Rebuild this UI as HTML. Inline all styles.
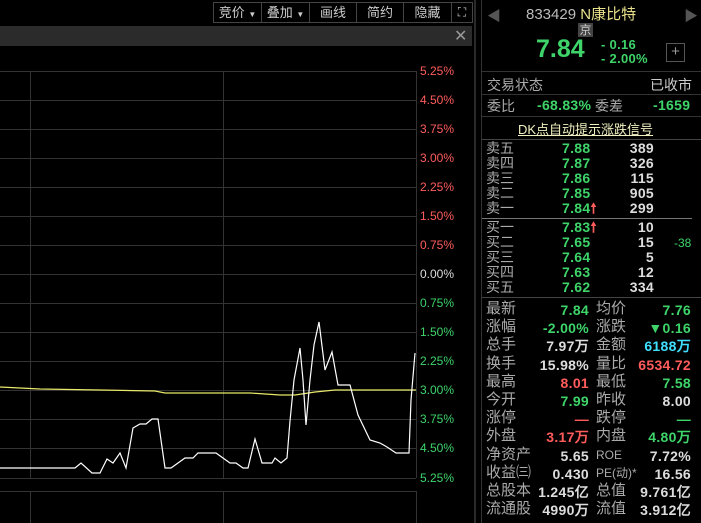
<!DOCTYPE html>
<html><head><meta charset="utf-8"><style>
body{margin:0;width:701px;height:523px;background:#000;overflow:hidden;position:relative;font-family:"Liberation Sans","Noto Sans CJK SC",sans-serif;color:#c8c8c8}
.a{position:absolute;white-space:nowrap}
.btn{position:absolute;top:2px;height:21px;border:1px solid #444;box-sizing:border-box;font-size:13px;line-height:19px;text-align:center;color:#ccc}
.g{color:#3ed46a}.r{color:#ff5c5c}.w{color:#ddd}.c{color:#3fe0ff}
.lbl{color:#aaa;font-size:14px}
.num{font-family:"Liberation Sans",sans-serif;font-size:14px;font-weight:bold;letter-spacing:0.3px}
.ax{position:absolute;left:420px;font-size:12px}
</style></head><body>
<div class="btn" style="left:213px;width:49px">竞价 <span style="font-size:8px">▼</span></div>
<div class="btn" style="left:261px;width:49px">叠加 <span style="font-size:8px">▼</span></div>
<div class="btn" style="left:309px;width:48px">画线</div>
<div class="btn" style="left:356px;width:48px">简约</div>
<div class="btn" style="left:403px;width:49px">隐藏 <span style="font-size:9px">▶▶</span></div>
<div class="btn" style="left:451px;width:22px;font-size:12px">⛶</div>
<div class="a" style="left:0;top:26px;width:472px;height:20px;background:#2b2b2b"></div>
<div class="a" style="left:454px;top:26px;font-size:16px;color:#999">✕</div>
<div class="a" style="left:474px;top:0;width:2px;height:523px;background:#2a2a2a"></div>
<div class="a" style="left:481px;top:0;width:1px;height:523px;background:#333"></div>
<svg class="a" style="left:0;top:0" width="420" height="523">
<g stroke="#333" stroke-width="1">
<line x1="0" y1="71.5" x2="416" y2="71.5"/><line x1="0" y1="100.5" x2="416" y2="100.5"/><line x1="0" y1="129.5" x2="416" y2="129.5"/><line x1="0" y1="158.5" x2="416" y2="158.5"/><line x1="0" y1="187.5" x2="416" y2="187.5"/><line x1="0" y1="216.5" x2="416" y2="216.5"/><line x1="0" y1="245.5" x2="416" y2="245.5"/><line x1="0" y1="274.5" x2="416" y2="274.5"/><line x1="0" y1="303.5" x2="416" y2="303.5"/><line x1="0" y1="332.5" x2="416" y2="332.5"/><line x1="0" y1="361.5" x2="416" y2="361.5"/><line x1="0" y1="390.5" x2="416" y2="390.5"/><line x1="0" y1="419.5" x2="416" y2="419.5"/><line x1="0" y1="448.5" x2="416" y2="448.5"/><line x1="0" y1="478.5" x2="416" y2="478.5"/><line x1="0" y1="491.5" x2="416" y2="491.5"/>
<line x1="30.5" y1="71" x2="30.5" y2="478"/><line x1="223.5" y1="71" x2="223.5" y2="478"/><line x1="416.5" y1="71" x2="416.5" y2="478"/>
<line x1="30.5" y1="491" x2="30.5" y2="523"/><line x1="223.5" y1="491" x2="223.5" y2="523"/><line x1="416.5" y1="491" x2="416.5" y2="523"/>
</g>
<polyline fill="none" stroke="#e8e86a" stroke-width="1.2" points="0,387 20,388 40,389 100,390 155,391 165,393 250,393 280,395 295,395 315,392 335,390 385,390 416,390"/>
<polyline fill="none" stroke="#fff" stroke-width="1.2" points="0,468 75,468 81,463 92,473 100,473 107,459 113,463 120,453 126,468 133,428 140,424 146,424 152,419 158,419 165,468 171,468 185,458 193,458 198,453 216,453 230,463 236,463 243,468 248,468 255,439 262,463 272,463 275,458 281,463 287,458 290,421 294,380 300,348 303,380 306,425 310,380 314,345 319,322 325,370 332,352 338,385 350,385 358,415 370,440 380,443 387,447 396,453 409,453 411,400 415,353"/>
</svg>
<div class="ax r" style="top:64px">5.25%</div><div class="ax r" style="top:93px">4.50%</div><div class="ax r" style="top:122px">3.75%</div><div class="ax r" style="top:151px">3.00%</div><div class="ax r" style="top:180px">2.25%</div><div class="ax r" style="top:209px">1.50%</div><div class="ax r" style="top:238px">0.75%</div><div class="ax w" style="top:267px">0.00%</div>
<div class="ax g" style="top:296px">0.75%</div><div class="ax g" style="top:325px">1.50%</div><div class="ax g" style="top:354px">2.25%</div><div class="ax g" style="top:383px">3.00%</div><div class="ax g" style="top:412px">3.75%</div><div class="ax g" style="top:441px">4.50%</div><div class="ax g" style="top:471px">5.25%</div>
<div class="a" style="left:487px;top:6px;color:#555;font-size:14px">◀</div>
<div class="a" style="left:684px;top:6px;color:#555;font-size:14px">▶</div>
<div class="a" style="left:526px;top:3px;font-size:15px;color:#bbb">833429 <span style="color:#e8e08a">N康比特</span></div>
<div class="a" style="left:578px;top:23px;width:15px;height:14px;background:#444;font-size:12px;line-height:14px;text-align:center;color:#ccc">京</div>
<div class="a g" style="left:536px;top:35px;font-size:25px;font-weight:bold">7.84</div>
<div class="a g num" style="left:601px;top:37px;font-size:13px">- 0.16</div>
<div class="a g num" style="left:601px;top:51px;font-size:13px">- 2.00%</div>
<div class="a" style="left:666px;top:43px;width:17px;height:17px;border:1px solid #555;color:#999;font-size:15px;line-height:16px;text-align:center">+</div>
<div class="a" style="left:482px;top:71px;width:219px;height:1px;background:#333"></div>
<div class="a lbl" style="left:487px;top:75px">交易状态</div><div class="a lbl" style="left:650px;top:75px;color:#ccc">已收市</div>
<div class="a" style="left:482px;top:94px;width:219px;height:1px;background:#333"></div>
<div class="a lbl" style="left:487px;top:96px">委比</div><div class="a g num" style="left:537px;top:97px">-68.83%</div><div class="a lbl" style="left:595px;top:96px">委差</div><div class="a g num" style="left:653px;top:97px">-1659</div>
<div class="a" style="left:482px;top:116px;width:219px;height:1px;background:#333"></div>
<div class="a" style="left:518px;top:119px;font-size:13px;color:#f0f0c0;text-decoration:underline">DK点自动提示涨跌信号</div>
<div class="a" style="left:482px;top:139px;width:219px;height:1px;background:#444"></div>
<div class="a lbl" style="left:486px;top:141px;line-height:15px">卖五<br>卖四<br>卖三<br>卖二<br>卖一</div>
<div class="a g num" style="left:562px;top:141px;line-height:15px">7.88<br>7.87<br>7.86<br>7.85<br>7.84<span class="r">🠕</span></div>
<div class="a w num" style="left:616px;top:141px;line-height:15px;text-align:right;width:38px">389<br>326<br>115<br>905<br>299</div>
<div class="a" style="left:482px;top:218px;width:210px;height:1px;background:#777"></div>
<div class="a lbl" style="left:486px;top:220px;line-height:15px">买一<br>买二<br>买三<br>买四<br>买五</div>
<div class="a g num" style="left:562px;top:220px;line-height:15px">7.83<span class="r">🠕</span><br>7.65<br>7.64<br>7.63<br>7.62</div>
<div class="a w num" style="left:616px;top:220px;line-height:15px;text-align:right;width:38px">10<br>15<br>5<br>12<br>334</div>
<div class="a g" style="left:674px;top:236px;font-size:12px">-38</div>
<div class="a" style="left:482px;top:297px;width:219px;height:1px;background:#444"></div>
<div class="a lbl" style="left:486px;top:300px;line-height:18.2px;font-size:15px">最新<br>涨幅<br>总手<br>换手<br>最高<br>今开<br>涨停<br>外盘<br>净资产<br>收益㈢<br>总股本<br>流通股</div>
<div class="a num" style="left:520px;top:301px;line-height:18.2px;text-align:right;width:69px"><span class="g">7.84</span><br><span class="g">-2.00%</span><br><span class="w">7.97万</span><br><span class="w">15.98%</span><br><span class="r">8.01</span><br><span class="g">7.99</span><br><span class="r">—</span><br><span class="r">3.17万</span><br><span class="w">5.65</span><br><span class="w">0.430</span><br><span class="w">1.245亿</span><br><span class="w">4990万</span></div>
<div class="a lbl" style="left:596px;top:300px;line-height:18.2px;font-size:15px">均价<br>涨跌<br>金额<br>量比<br>最低<br>昨收<br>跌停<br>内盘<br><span style="font-size:12px">ROE</span><br><span style="font-size:12px">PE(动)*</span><br>总值<br>流值</div>
<div class="a num" style="left:622px;top:301px;line-height:18.2px;text-align:right;width:69px"><span class="g">7.76</span><br><span class="g">▼0.16</span><br><span class="c">6188万</span><br><span class="r">6534.72</span><br><span class="g">7.58</span><br><span class="w">8.00</span><br><span class="g">—</span><br><span class="g">4.80万</span><br><span class="w">7.72%</span><br><span class="w">16.56</span><br><span class="w">9.761亿</span><br><span class="w">3.912亿</span></div>
</body></html>
